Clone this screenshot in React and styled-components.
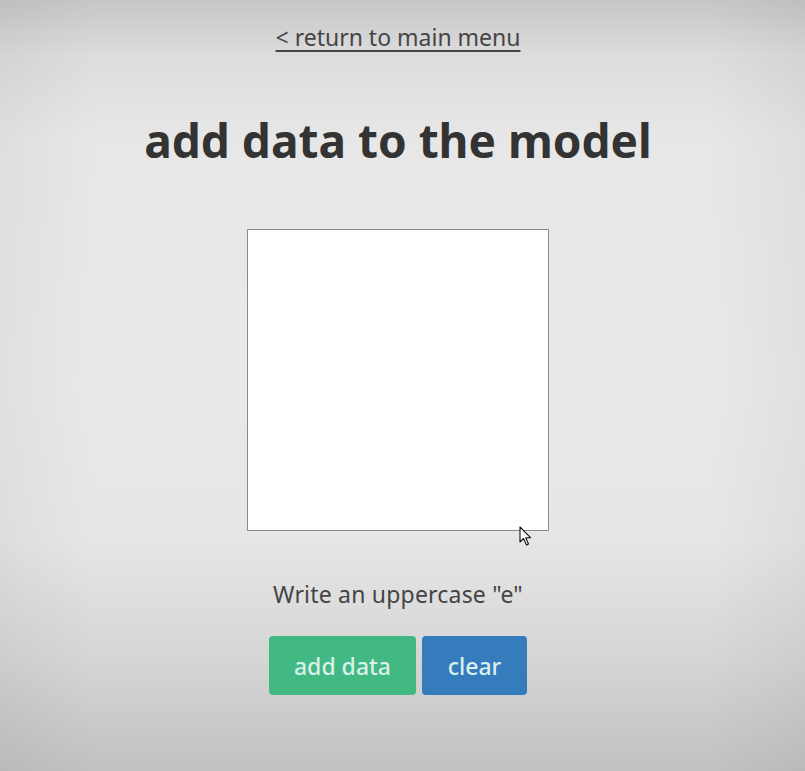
import React from 'react'
import styled, { createGlobalStyle } from 'styled-components'

const GlobalStyle = createGlobalStyle`
    html, body {
        margin: 0;
        padding: 0;
    }
    body {
        font-family: "Noto Sans", "Open Sans", sans-serif;
    }
`

const Page = styled.div`
    min-height: 100vh;
    box-sizing: border-box;
    display: flex;
    flex-direction: column;
    align-items: center;
    padding: 22px 9px 0 0;
    background:
        linear-gradient(to right, rgba(0, 0, 0, 0.04), rgba(0, 0, 0, 0) 12%, rgba(0, 0, 0, 0) 88%, rgba(0, 0, 0, 0.04)),
        linear-gradient(to bottom, #c6c6c6 0%, #dcdcdc 7%, #e7e7e7 18%, #e9e9e9 50%, #e6e6e6 70%, #d6d6d6 85%, #c1c1c1 100%);
    color: #3c3c3c;
`

const BackLink = styled.a`
    font-size: 23px;
    line-height: 30px;
    color: #454545;
    text-decoration: underline;
    text-underline-offset: 4px;
    text-decoration-thickness: 2px;
    cursor: pointer;
`

const Title = styled.h1`
    margin: 60px 0 0;
    font-size: 46px;
    line-height: 56px;
    font-weight: 700;
    color: #333;
`

const CanvasWrap = styled.div`
    position: relative;
    margin-top: 61px;
`

const DrawArea = styled.div`
    width: 300px;
    height: 300px;
    background: #fff;
    border: 1px solid #8a8a8a;
`

// the mouse pointer sits over the drawing area
const Pointer = styled.svg`
    position: absolute;
    left: 272px;
    top: 297px;
`

const Prompt = styled.p`
    margin: 48px 0 0;
    font-size: 23px;
    line-height: 30px;
    color: #444;
    letter-spacing: 0.2px;
`

const ButtonRow = styled.div`
    display: flex;
    gap: 6px;
    margin-top: 27px;
`

const Button = styled.button`
    height: 59px;
    width: ${p => p.$w}px;
    border: none;
    border-radius: 4px;
    background: ${p => p.$bg};
    color: #d9f1ea;
    font-family: inherit;
    font-size: 23px;
    font-weight: 500;
    cursor: pointer;
`

export default function App() {
    return (
        <>
            <GlobalStyle />
            <Page>
                <BackLink>&lt; return to main menu</BackLink>
                <Title>add data to the model</Title>
                <CanvasWrap>
                    <DrawArea />
                    <Pointer width="14" height="21" viewBox="0 0 14 21">
                        <path d="M1 1 L1 16 L4.5 12.5 L7.5 19 L9.5 18 L6.7 11.7 L11.5 11.7 Z"
                            fill="#fff" stroke="#111" strokeWidth="1.1" strokeLinejoin="round" />
                    </Pointer>
                </CanvasWrap>
                <Prompt>Write an uppercase "e"</Prompt>
                <ButtonRow>
                    <Button $w={147} $bg="#42b883">add data</Button>
                    <Button $w={105} $bg="#357cbd">clear</Button>
                </ButtonRow>
            </Page>
        </>
    )
}
